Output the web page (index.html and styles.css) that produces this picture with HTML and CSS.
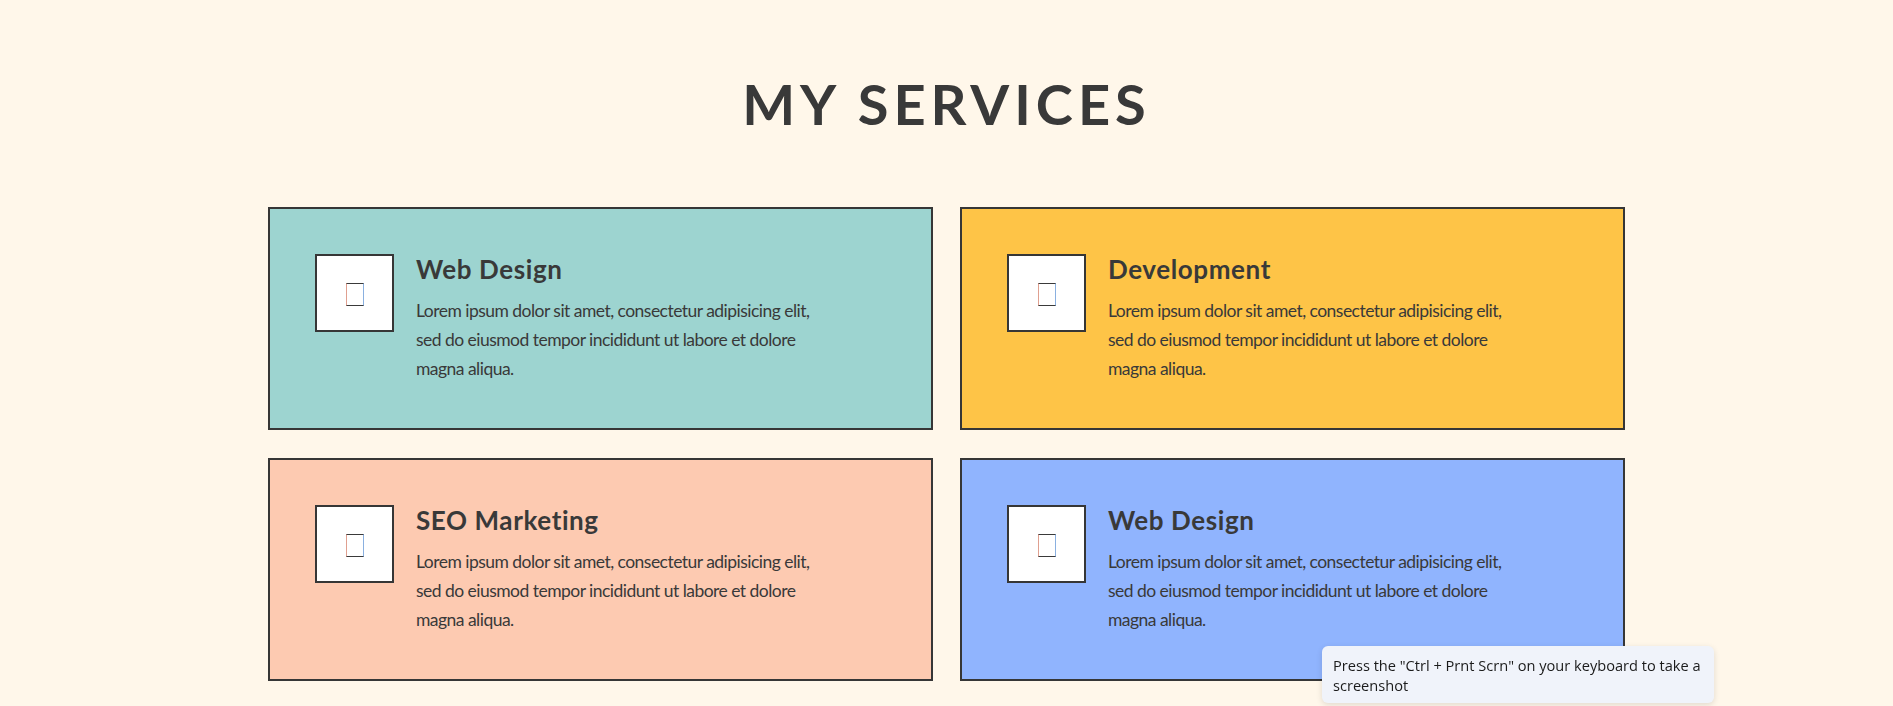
FILE: index.html
```html
<!DOCTYPE html>
<html lang="en">
<head>
<meta charset="utf-8">
<title>My Services</title>
<link rel="stylesheet" href="styles.css">
</head>
<body>
<section class="services">
  <h2 class="services-title">MY SERVICES</h2>
  <div class="services-grid">
    <article class="service-card card-teal">
      <div class="service-icon"><span class="glyph"></span></div>
      <div class="service-body">
        <h3 class="service-name">Web Design</h3>
        <p class="service-text">Lorem ipsum dolor sit amet, consectetur adipisicing elit, sed do eiusmod tempor incididunt ut labore et dolore magna aliqua.</p>
      </div>
    </article>
    <article class="service-card card-yellow">
      <div class="service-icon"><span class="glyph"></span></div>
      <div class="service-body">
        <h3 class="service-name">Development</h3>
        <p class="service-text">Lorem ipsum dolor sit amet, consectetur adipisicing elit, sed do eiusmod tempor incididunt ut labore et dolore magna aliqua.</p>
      </div>
    </article>
    <article class="service-card card-peach">
      <div class="service-icon"><span class="glyph"></span></div>
      <div class="service-body">
        <h3 class="service-name">SEO Marketing</h3>
        <p class="service-text">Lorem ipsum dolor sit amet, consectetur adipisicing elit, sed do eiusmod tempor incididunt ut labore et dolore magna aliqua.</p>
      </div>
    </article>
    <article class="service-card card-blue">
      <div class="service-icon"><span class="glyph"></span></div>
      <div class="service-body">
        <h3 class="service-name">Web Design</h3>
        <p class="service-text">Lorem ipsum dolor sit amet, consectetur adipisicing elit, sed do eiusmod tempor incididunt ut labore et dolore magna aliqua.</p>
      </div>
    </article>
  </div>
</section>
<div class="toast">Press the "Ctrl + Prnt Scrn" on your keyboard to take a screenshot</div>
</body>
</html>
```
FILE: styles.css
```css
* { box-sizing: border-box; }

html, body {
  margin: 0;
  padding: 0;
}

body {
  background: #fff7ea;
  color: #393939;
  font-family: Lato, "Open Sans", sans-serif;
}

.services {
  padding-top: 76px;
}

.services-title {
  margin: 0 0 75px;
  text-align: center;
  font-size: 56px;
  line-height: 1;
  font-weight: 700;
  letter-spacing: 5px;
  color: #393939;
}

.services-grid {
  width: 1357px;
  margin: 0 auto;
  display: grid;
  grid-template-columns: 665px 665px;
  column-gap: 27px;
  row-gap: 28px;
}

.service-card {
  display: flex;
  align-items: flex-start;
  gap: 22px;
  padding: 45px;
  border: 2px solid #363636;
  min-height: 222px;
}

.card-teal { background: #9dd4d0; }
.card-yellow { background: #fec447; }
.card-peach { background: #fdcab1; }
.card-blue { background: #90b4fe; }

.service-icon {
  flex: none;
  width: 79px;
  height: 78px;
  background: #fff;
  border: 2px solid #363636;
  display: flex;
  align-items: center;
  justify-content: center;
  padding-top: 3px;
}

.glyph {
  display: block;
  width: 18px;
  height: 23px;
  border: 1px solid #3a3a3a;
  border-left-color: #e0a090;
  border-right-color: #8ab0e0;
}

.service-body {
  max-width: 410px;
}

.service-name {
  margin: 0 0 11px;
  font-size: 26px;
  line-height: 1.2;
  font-weight: 700;
  letter-spacing: 0.6px;
}

.service-text {
  margin: 0;
  font-size: 17.5px;
  line-height: 29px;
  letter-spacing: -0.53px;
}

.toast {
  position: fixed;
  left: 1322px;
  top: 646px;
  width: 392px;
  height: 57px;
  padding: 9px 11px;
  background: #f0f3fa;
  border-radius: 6px;
  box-shadow: 0 2px 6px rgba(0, 0, 0, 0.12);
  font-family: "Open Sans", sans-serif;
  font-size: 14.6px;
  line-height: 20px;
  color: #1b1b1b;
}
```
